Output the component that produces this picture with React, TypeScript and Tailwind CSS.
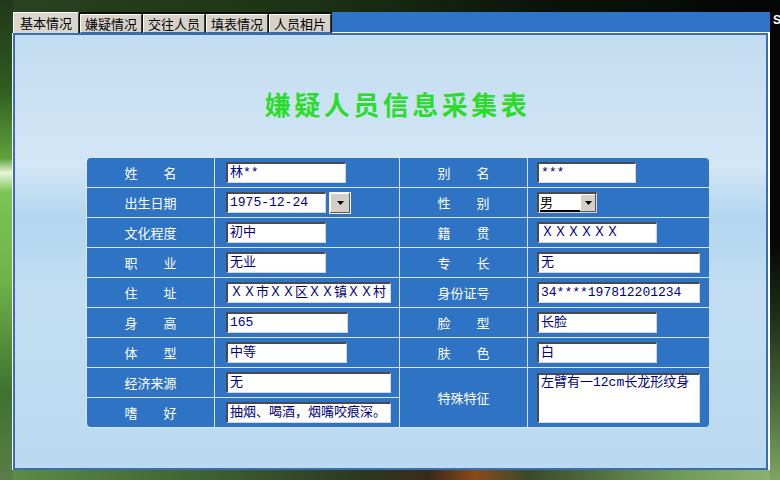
import type { ReactNode } from "react";

function Arrow() {
  return (
    <svg width="7" height="4" viewBox="0 0 7 4">
      <polygon points="0,0 7,0 3.5,4" fill="#000" />
    </svg>
  );
}

function Label({ text }: { text: string }) {
  if (text.length === 2) {
    return (
      <div className="flex w-[52px] justify-between">
        <span>{text[0]}</span>
        <span>{text[1]}</span>
      </div>
    );
  }
  return <span>{text}</span>;
}

function LabelCell({ text, className = "" }: { text: string; className?: string }) {
  return (
    <div className={`flex items-center justify-center bg-[#2f73c4] text-[13px] text-white ${className}`}>
      <Label text={text} />
    </div>
  );
}

function Box({ w, children }: { w: string; children?: ReactNode }) {
  return (
    <div
      className={`${w} h-[21px] overflow-hidden whitespace-nowrap border-t-2 border-l-2 border-b border-r border-t-[#4a4a4a] border-l-[#4a4a4a] border-b-[#d6d6d6] border-r-[#d6d6d6] bg-white px-[2px] font-['Liberation_Mono','Noto_Sans_CJK_SC',monospace] text-[13px] leading-[18px] text-[#000080]`}
    >
      {children}
    </div>
  );
}

function FieldCell({ children, pad = "pl-[11px]", className = "" }: { children: ReactNode; pad?: string; className?: string }) {
  return <div className={`flex items-center gap-[3px] bg-[#2f73c4] ${pad} ${className}`}>{children}</div>;
}

export default function App() {
  return (
    <div className="flex h-[480px] w-[780px] overflow-hidden font-['Noto_Sans_CJK_SC',sans-serif]">
      {/* left desktop edge */}
      <div className="w-[13px] shrink-0 bg-[linear-gradient(180deg,#22381a_0%,#2f5a20_18%,#5fa23c_33%,#e8f5d8_36%,#7cc455_40%,#6fb44a_58%,#3f7230_82%,#5b7d4a_100%)]" />

      <div className="flex w-[757px] flex-col">
        <div className="h-[12px] bg-[linear-gradient(90deg,#2a4220_0%,#1c3214_40%,#0a140a_70%,#040604_100%)]" />

        {/* tab strip */}
        <div className="flex h-[21px] items-end bg-[#0b120a]">
          <div className="flex h-[21px] w-[66px] items-center justify-center border-l border-t border-r border-l-white border-t-white border-r-[#404040] bg-[#dad6ce] text-[13px] text-black">
            基本情况
          </div>
          {["嫌疑情况", "交往人员", "填表情况", "人员相片"].map((t) => (
            <div
              key={t}
              className="ml-px flex h-[19px] w-[62px] items-center justify-center border-l border-t border-r border-b border-l-white border-t-white border-r-[#404040] border-b-[#3a6aa8] bg-[#d6d2ca] text-[13px] leading-none text-black"
            >
              {t}
            </div>
          ))}
          <div className="ml-px h-[21px] flex-1 border-b border-b-white bg-[#2f74c6]" />
        </div>

        {/* panel */}
        <div className="mr-[2px] flex h-[437px] flex-col border-2 border-[#3c6eae] bg-[linear-gradient(180deg,#c2dcf1_0%,#d3e7f6_30%,#b3d6ef_42%,#c3def2_60%,#bbd9f0_100%)] shadow-[-1px_0_0_#ffffff]">
          <div className="ml-[71px] mt-[56px] flex w-[623px] flex-col">
            <div className="text-center text-[26px] font-bold leading-[26px] tracking-[3.5px] text-[#2bdc2b]">
              嫌疑人员信息采集表
            </div>

            <div className="mt-[40px] grid grid-cols-[127px_184px_127px_181px] grid-rows-[repeat(9,29px)] gap-px rounded-[5px] bg-[#d4e8f8] p-px">
              <LabelCell text="姓名" className="rounded-tl-[4px]" />
              <FieldCell>
                <Box w="w-[120px]">林**</Box>
              </FieldCell>
              <LabelCell text="别名" />
              <FieldCell pad="pl-[9px]" className="rounded-tr-[4px]">
                <Box w="w-[99px]">***</Box>
              </FieldCell>

              <LabelCell text="出生日期" />
              <FieldCell>
                <Box w="w-[100px]">1975-12-24</Box>
                <div className="flex h-[22px] w-[22px] items-center justify-center border border-[#eef4fa] bg-[#d4d0c8] shadow-[inset_-1px_-1px_0_#5a5a5a,inset_1px_1px_0_#ffffff]">
                  <Arrow />
                </div>
              </FieldCell>
              <LabelCell text="性别" />
              <FieldCell pad="pl-[9px]">
                <div className="flex h-[21px] w-[60px] border-t-2 border-l-2 border-b border-r border-t-[#4a4a4a] border-l-[#4a4a4a] border-b-[#d6d6d6] border-r-[#d6d6d6] bg-white">
                  <div className="flex-1 pl-px text-[13px] leading-[16px] text-black">
                    <div className="border-b-2 border-black">男</div>
                  </div>
                  <div className="flex w-[16px] items-center justify-center bg-[#d4d0c8] shadow-[inset_-1px_-1px_0_#5a5a5a,inset_1px_1px_0_#ffffff]">
                    <Arrow />
                  </div>
                </div>
              </FieldCell>

              <LabelCell text="文化程度" />
              <FieldCell>
                <Box w="w-[100px]">初中</Box>
              </FieldCell>
              <LabelCell text="籍贯" />
              <FieldCell pad="pl-[9px]">
                <Box w="w-[120px]">ＸＸＸＸＸＸ</Box>
              </FieldCell>

              <LabelCell text="职业" />
              <FieldCell>
                <Box w="w-[100px]">无业</Box>
              </FieldCell>
              <LabelCell text="专长" />
              <FieldCell pad="pl-[9px]">
                <Box w="w-[163px]">无</Box>
              </FieldCell>

              <LabelCell text="住址" />
              <FieldCell>
                <Box w="w-[165px]">ＸＸ市ＸＸ区ＸＸ镇ＸＸ村</Box>
              </FieldCell>
              <LabelCell text="身份证号" />
              <FieldCell pad="pl-[9px]">
                <Box w="w-[163px]">34****197812201234</Box>
              </FieldCell>

              <LabelCell text="身高" />
              <FieldCell>
                <Box w="w-[122px]">165</Box>
              </FieldCell>
              <LabelCell text="脸型" />
              <FieldCell pad="pl-[9px]">
                <Box w="w-[120px]">长脸</Box>
              </FieldCell>

              <LabelCell text="体型" />
              <FieldCell>
                <Box w="w-[121px]">中等</Box>
              </FieldCell>
              <LabelCell text="肤色" />
              <FieldCell pad="pl-[9px]">
                <Box w="w-[120px]">白</Box>
              </FieldCell>

              <LabelCell text="经济来源" />
              <FieldCell>
                <Box w="w-[165px]">无</Box>
              </FieldCell>
              <LabelCell text="特殊特征" className="row-span-2" />
              <FieldCell pad="pl-[9px]" className="row-span-2 rounded-br-[4px]">
                <div className="h-[50px] w-[163px] overflow-hidden border-t-2 border-l-2 border-b border-r border-t-[#4a4a4a] border-l-[#4a4a4a] border-b-[#d6d6d6] border-r-[#d6d6d6] bg-white px-[2px] font-['Liberation_Mono','Noto_Sans_CJK_SC',monospace] text-[13px] leading-[16px] text-[#000080]">
                  左臂有一12cm长龙形纹身
                </div>
              </FieldCell>

              <LabelCell text="嗜好" className="rounded-bl-[4px]" />
              <FieldCell>
                <Box w="w-[165px]">抽烟、喝酒，烟嘴咬痕深。</Box>
              </FieldCell>
            </div>
          </div>
        </div>

        <div className="h-[10px] bg-[linear-gradient(90deg,#5c8c46_0%,#3e6232_25%,#2c3a22_45%,#3a2a18_55%,#8a4a1c_61%,#3a4a2a_68%,#6e9a58_88%,#8cb070_100%)]" />
      </div>

      {/* right desktop edge */}
      <div className="flex w-[10px] shrink-0 flex-col bg-[linear-gradient(180deg,#050505_0%,#050505_50%,#1c2c16_65%,#4e6e3e_85%,#7fa464_100%)]">
        <div className="h-[12px]" />
        <div className="h-[21px] overflow-hidden pl-[3px] font-['Liberation_Sans',sans-serif] text-[12px] font-bold leading-[16px] text-white">
          S
        </div>
      </div>
    </div>
  );
}
